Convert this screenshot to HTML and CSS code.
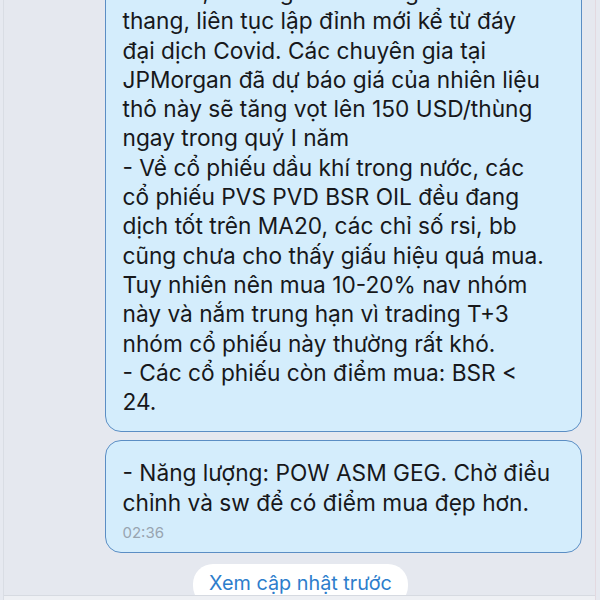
FILE: index.html
```html
<!DOCTYPE html>
<html lang="vi">
<head>
<meta charset="utf-8">
<link rel="stylesheet" href="styles.css">
</head>
<body>
<div class="screen">
  <div class="feed">
    <div class="bubble">
      <p class="msg">dầu mỏ, khiến giá dầu thế giới leo<br>thang, liên tục lập đỉnh mới kể từ đáy<br>đại dịch Covid. Các chuyên gia tại<br>JPMorgan đã dự báo giá của nhiên liệu<br>thô này sẽ tăng vọt lên 150 USD/thùng<br>ngay trong quý I năm<br>- Về cổ phiếu dầu khí trong nước, các<br>cổ phiếu PVS PVD BSR OIL đều đang<br>dịch tốt trên MA20, các chỉ số rsi, bb<br>cũng chưa cho thấy giấu hiệu quá mua.<br>Tuy nhiên nên mua 10-20% nav nhóm<br>này và nắm trung hạn vì trading T+3<br>nhóm cổ phiếu này thường rất khó.<br>- Các cổ phiếu còn điểm mua: BSR &lt;<br>24.</p>
    </div>
    <div class="bubble bubble-last">
      <p class="msg">- Năng lượng: POW ASM GEG. Chờ điều<br>chỉnh và sw để có điểm mua đẹp hơn.</p>
      <div class="time">02:36</div>
    </div>
    <div class="more-row">
      <span class="more">Xem cập nhật trước</span>
    </div>
  </div>
  <div class="footer"></div>
</div>
</body>
</html>
```
FILE: styles.css
```css
html, body {
  margin: 0;
  padding: 0;
  width: 600px;
  height: 600px;
  overflow: hidden;
  background: #e6e9f0;
}
.screen {
  height: 600px;
  display: flex;
  flex-direction: column;
  margin: 0 4px 0 3px;
  border-left: 1px solid #d9dde4;
  border-right: 1px solid #e3d9e0;
  background: #e5e8ef;
  font-family: Inter, "Noto Sans", sans-serif;
  color: #17181b;
}
.feed {
  flex: 1;
  overflow: hidden;
  display: flex;
  flex-direction: column;
  justify-content: flex-end;
  align-items: stretch;
  padding: 0 13px 0 101px;
}
.bubble {
  flex-shrink: 0;
  background: #d4edfc;
  border: 1.5px solid #5b8ec4;
  border-radius: 16px;
  padding: 0 10px 15px 16.5px;
  margin-bottom: 8px;
}
.msg {
  margin: 0;
  font-size: 22.7px;
  line-height: 29.3px;
  letter-spacing: 0;
  white-space: nowrap;
}
.bubble-last {
  padding-top: 17px;
  padding-bottom: 10px;
  margin-bottom: 11px;
}
.time {
  font-size: 15px;
  color: #98a4b0;
  margin-top: 7px;
  line-height: 18px;
}
.more-row {
  flex-shrink: 0;
  display: flex;
  justify-content: center;
  height: 31px;
  overflow: hidden;
  padding-right: 86px;
}
.more {
  background: #ffffff;
  border-radius: 20px;
  height: 42px;
  padding: 7px 16px 0;
  box-sizing: border-box;
  font-size: 19.8px;
  color: #2d7dcc;
}
.footer {
  height: 4px;
  border-top: 1px solid #d6dae1;
  background: #eef0f4;
  flex-shrink: 0;
}
```
